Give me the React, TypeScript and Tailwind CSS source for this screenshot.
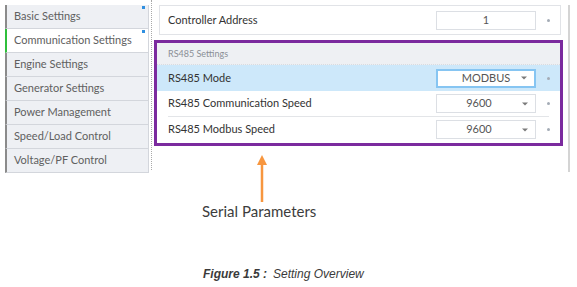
const menu = [
  "Basic Settings",
  "Communication Settings",
  "Engine Settings",
  "Generator Settings",
  "Power Management",
  "Speed/Load Control",
  "Voltage/PF Control",
];

function Caret() {
  return (
    <span className="absolute right-[7px] top-1/2 -translate-y-1/2 border-x-[3px] border-t-[3px] border-x-transparent border-t-[#7a7a7a]" />
  );
}

function Field({
  value,
  select,
  focused,
  shift,
}: {
  value: string;
  select?: boolean;
  focused?: boolean;
  shift?: boolean;
}) {
  return (
    <div className="flex items-center">
      <div
        className={`relative flex h-[19px] w-[100px] items-center justify-center bg-white text-[11px] text-[#555] ${
          focused ? "border-2 border-[#86c5f2]" : "border border-[#dcdfe4]"
        } ${shift ? "pr-[14px]" : ""}`}
      >
        {value}
        {select && <Caret />}
      </div>
      <span className="flex w-[24px] justify-center">
        <span className="h-[3px] w-[3px] rounded-full bg-[#a4acb6]" />
      </span>
    </div>
  );
}

export default function App() {
  return (
    <div className="h-[287px] w-[577px] overflow-hidden bg-white font-['Lato',sans-serif]">
      <div className="flex items-start">
        {/* Sidebar */}
        <div className="ml-[5px] mt-[5px] w-[144px]">
          {menu.map((item, i) => (
            <div
              key={item}
              className={`relative flex h-[24px] items-center border-b border-r border-[#d3d6dc] pl-[7px] text-[11px] text-[#606060] ${
                i === 1
                  ? "border-l-[2px] border-l-[#2fbf3b] bg-white"
                  : "border-l-[2px] border-l-[#8b8b8b] bg-[#eef0f4]"
              }`}
            >
              {item}
              {i < 2 && (
                <span className="absolute right-[3px] top-[1px] h-[3px] w-[3px] bg-[#2f8fe0]" />
              )}
            </div>
          ))}
        </div>

        <div className="ml-[2px] h-[170px] border-l border-dotted border-[#a9a9a9]" />

        {/* Main */}
        <div className="ml-[2px] w-[412px] pt-[5px]">
          <div className="ml-[5px] flex h-[30px] w-[402px] items-center border border-[#e1e3e7] bg-white pl-[8px]">
            <span className="flex-1 text-[11px] text-[#333]">Controller Address</span>
            <Field value="1" />
          </div>

          <div className="mt-[5px] h-[106px] w-[409px] border-[3px] border-[#7b2a9e] bg-white">
            <div className="flex h-[22px] items-center border-b border-dotted border-[#d8dbe0] bg-[#eef0f3] pl-[11px] text-[9px] text-[#8a8f96]">
              RS485 Settings
            </div>
            <div className="flex h-[26px] items-center bg-[#cde8fa] pl-[11px]">
              <span className="flex-1 text-[11px] text-[#333]">RS485 Mode</span>
              <Field value="MODBUS" select focused />
            </div>
            <div className="mx-[11px] flex h-[26px] items-center border-b border-[#e3e5e8]">
              <span className="flex-1 text-[11px] text-[#333]">RS485 Communication Speed</span>
              <div className="-mr-[11px]">
                <Field value="9600" select shift />
              </div>
            </div>
            <div className="flex h-[25px] items-center pl-[11px]">
              <span className="flex-1 text-[11px] text-[#333]">RS485 Modbus Speed</span>
              <Field value="9600" select shift />
            </div>
          </div>

          <svg className="ml-[102px] mt-[9px] block" width="12" height="47" viewBox="0 0 12 47">
            <line x1="6" y1="8" x2="6" y2="47" stroke="#f7963f" strokeWidth="2.5" />
            <polygon points="6,0 11,10 1,10" fill="#f7963f" />
          </svg>

          <div className="ml-[48px] text-[15px] leading-[18px] text-[#3c3c3c]">Serial Parameters</div>

          <div className="ml-[49px] mt-[47px] font-['Liberation_Sans',Arial,sans-serif] text-[12px] italic leading-[15px] text-[#3a3a3a]">
            <span className="font-bold">Figure 1.5 :</span>
            <span className="ml-[6px]">Setting Overview</span>
          </div>
        </div>

        <div className="ml-[2px] mt-[5px] h-[167px] w-[2px] bg-[#d4d4d4]" />
      </div>
    </div>
  );
}
